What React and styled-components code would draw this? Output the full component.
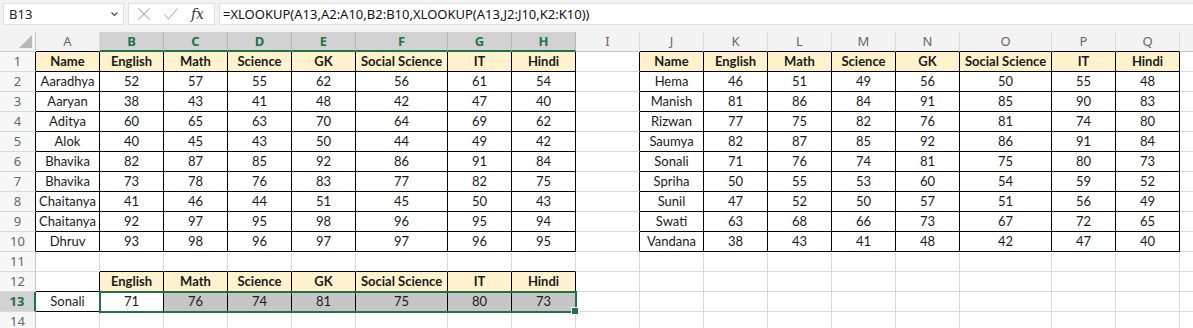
import React from "react";
import styled, { createGlobalStyle } from "styled-components";

const GlobalStyle = createGlobalStyle`
  html, body {
    margin: 0;
    background: #ffffff;
    overflow: hidden;
  }
  body {
    font-family: "Lato", "Liberation Sans", sans-serif;
  }
`;

// column widths in px, A..Q then one partial column with no visible letter
const COLS = [
  ["A", 64], ["B", 64], ["C", 64], ["D", 64], ["E", 64], ["F", 92], ["G", 64],
  ["H", 64], ["I", 64], ["J", 64], ["K", 64], ["L", 64], ["M", 64], ["N", 64],
  ["O", 92], ["P", 64], ["Q", 64], ["", 64],
];
const ROW_COUNT = 14;
const HEAD = ["Name", "English", "Math", "Science", "GK", "Social Science", "IT", "Hindi"];

const LEFT = [
  ["Aaradhya", 52, 57, 55, 62, 56, 61, 54],
  ["Aaryan", 38, 43, 41, 48, 42, 47, 40],
  ["Aditya", 60, 65, 63, 70, 64, 69, 62],
  ["Alok", 40, 45, 43, 50, 44, 49, 42],
  ["Bhavika", 82, 87, 85, 92, 86, 91, 84],
  ["Bhavika", 73, 78, 76, 83, 77, 82, 75],
  ["Chaitanya", 41, 46, 44, 51, 45, 50, 43],
  ["Chaitanya", 92, 97, 95, 98, 96, 95, 94],
  ["Dhruv", 93, 98, 96, 97, 97, 96, 95],
];

const RIGHT = [
  ["Hema", 46, 51, 49, 56, 50, 55, 48],
  ["Manish", 81, 86, 84, 91, 85, 90, 83],
  ["Rizwan", 77, 75, 82, 76, 81, 74, 80],
  ["Saumya", 82, 87, 85, 92, 86, 91, 84],
  ["Sonali", 71, 76, 74, 81, 75, 80, 73],
  ["Spriha", 50, 55, 53, 60, 54, 59, 52],
  ["Sunil", 47, 52, 50, 57, 51, 56, 49],
  ["Swati", 63, 68, 66, 73, 67, 72, 65],
  ["Vandana", 38, 43, 41, 48, 42, 47, 40],
];

const RESULT = ["Sonali", 71, 76, 74, 81, 75, 80, 73];

const SEL_ROW = 13;
const SEL_COLS = [1, 7];

// what sits in a cell: { text, head, table }
function cellAt(r, c) {
  if (r >= 1 && r <= 10 && c >= 0 && c <= 7) {
    if (r === 1) return { text: HEAD[c], head: true, table: true };
    return { text: LEFT[r - 2][c], table: true };
  }
  if (r >= 1 && r <= 10 && c >= 9 && c <= 16) {
    if (r === 1) return { text: HEAD[c - 9], head: true, table: true };
    return { text: RIGHT[r - 2][c - 9], table: true };
  }
  if (r === 12 && c >= 1 && c <= 7) return { text: HEAD[c], head: true, table: true };
  if (r === 13 && c >= 0 && c <= 7) return { text: RESULT[c], table: true };
  return { text: "", table: false };
}

const isTable = (r, c) => cellAt(r, c).table;
const inSelCols = (c) => c >= SEL_COLS[0] && c <= SEL_COLS[1];

const Page = styled.div`
  width: 1193px;
  height: 328px;
  overflow: hidden;
  background: #ffffff;
`;

const FormulaBar = styled.div`
  display: flex;
  align-items: stretch;
  gap: 4px;
  height: 32px;
  padding: 3px 0 7px 3px;
  box-sizing: border-box;
  background: #f3f3f3;
`;

const NameBox = styled.div`
  width: 121px;
  display: flex;
  align-items: center;
  justify-content: space-between;
  padding: 0 4px 0 5px;
  box-sizing: border-box;
  background: #ffffff;
  border: 1px solid #e1e1e1;
  font-family: "Noto Sans", sans-serif;
  font-size: 13px;
  color: #222;
`;

const Buttons = styled.div`
  width: 87px;
  display: flex;
  align-items: center;
  justify-content: space-around;
  padding: 0 4px 0 2px;
  box-sizing: border-box;
  background: #ffffff;
  border: 1px solid #e1e1e1;
`;

const Fx = styled.span`
  font-family: "DejaVu Serif", "Liberation Serif", serif;
  font-style: italic;
  font-size: 14px;
  color: #333;
`;

const Formula = styled.div`
  flex: 1;
  display: flex;
  align-items: center;
  padding-left: 3px;
  background: #ffffff;
  border: 1px solid #e1e1e1;
  border-right: none;
  font-family: "Noto Sans", sans-serif;
  font-size: 13px;
  color: #111;
  white-space: nowrap;
`;

const Sheet = styled.div`
  position: relative;
  display: grid;
  grid-template-columns: 36px ${COLS.map(([, w]) => `${w}px`).join(" ")} 1fr;
  grid-auto-rows: 20px;
`;

const Corner = styled.div`
  box-sizing: border-box;
  background: #f3f3f3;
  border-right: 1px solid #c8c8c8;
  border-bottom: 1px solid #c8c8c8;
  display: flex;
  align-items: flex-end;
  justify-content: flex-end;
  padding: 0 3px 3px 0;
`;

const ColHead = styled.div`
  box-sizing: border-box;
  background: ${(p) => (p.$sel ? "#d2d2d2" : "#f3f3f3")};
  border-right: 1px solid ${(p) => (p.$sel ? "#b6b6b6" : "#dadada")};
  border-bottom: ${(p) =>
    p.$sel ? "2px solid #217346" : `1px solid ${p.$dark ? "#000" : "#c8c8c8"}`};
  text-align: center;
  line-height: 19px;
  font-family: "Noto Sans", sans-serif;
  font-size: 13px;
  font-weight: ${(p) => (p.$sel ? 700 : 400)};
  color: ${(p) => (p.$sel ? "#217346" : "#666")};
`;

const RowHead = styled.div`
  box-sizing: border-box;
  background: ${(p) => (p.$sel ? "#d2d2d2" : "#f7f7f7")};
  border-right: ${(p) =>
    p.$sel ? "2px solid #217346" : `1px solid ${p.$dark ? "#000" : "#c8c8c8"}`};
  border-bottom: 1px solid #dadada;
  text-align: center;
  line-height: 19px;
  font-family: "Noto Sans", sans-serif;
  font-size: 13px;
  font-weight: ${(p) => (p.$sel ? 700 : 400)};
  color: ${(p) => (p.$sel ? "#217346" : "#666")};
`;

const Cell = styled.div`
  box-sizing: border-box;
  overflow: hidden;
  white-space: nowrap;
  background: ${(p) => (p.$head ? "#fff2cc" : p.$picked ? "#c6c6c6" : "#ffffff")};
  border-right: 1px solid ${(p) => (p.$r ? "#000" : "#d9d9d9")};
  border-bottom: 1px solid ${(p) => (p.$b ? "#000" : "#d9d9d9")};
  text-align: center;
  line-height: 19px;
  font-size: 13px;
  font-weight: ${(p) => (p.$head ? 700 : 400)};
  color: #1a1a1a;
`;

const Selection = styled.div`
  position: absolute;
  box-sizing: border-box;
  border: 2px solid #217346;
  pointer-events: none;
`;

const Handle = styled.div`
  position: absolute;
  right: -4px;
  bottom: -4px;
  width: 6px;
  height: 6px;
  background: #217346;
  border: 1px solid #ffffff;
`;

const Chevron = () => (
  <svg width="9" height="6" viewBox="0 0 9 6">
    <path d="M1.5 1.5 L4.5 4.5 L7.5 1.5" fill="none" stroke="#444" strokeWidth="1.1" />
  </svg>
);

const Cancel = () => (
  <svg width="14" height="14" viewBox="0 0 14 14">
    <path d="M1.5 1.5 L12.5 12.5 M12.5 1.5 L1.5 12.5" stroke="#b5b5b5" strokeWidth="1.1" />
  </svg>
);

const Enter = () => (
  <svg width="16" height="14" viewBox="0 0 16 14">
    <path d="M1.5 7.5 L5.5 12 L14.5 1.5" fill="none" stroke="#b5b5b5" strokeWidth="1.1" />
  </svg>
);

const Triangle = () => (
  <svg width="13" height="13" viewBox="0 0 13 13">
    <polygon points="13,0 13,13 0,13" fill="#b9b9b9" />
  </svg>
);

export default function App() {
  const colLeft = (c) => 36 + COLS.slice(0, c).reduce((s, [, w]) => s + w, 0);
  const selLeft = colLeft(SEL_COLS[0]) - 1;
  const selRight = colLeft(SEL_COLS[1] + 1);

  const cells = [];
  cells.push(<Corner key="corner"><Triangle /></Corner>);
  COLS.forEach(([letter], c) => {
    cells.push(
      <ColHead key={`h${c}`} $sel={inSelCols(c)} $dark={isTable(1, c)}>
        {letter}
      </ColHead>
    );
  });
  cells.push(<ColHead key="hx" />);

  for (let r = 1; r <= ROW_COUNT; r++) {
    cells.push(
      <RowHead key={`r${r}`} $sel={r === SEL_ROW} $dark={isTable(r, 0)}>
        {r}
      </RowHead>
    );
    COLS.forEach((_, c) => {
      const cell = cellAt(r, c);
      cells.push(
        <Cell
          key={`${r}-${c}`}
          $head={cell.head}
          $picked={r === SEL_ROW && inSelCols(c) && c !== SEL_COLS[0]}
          $r={cell.table || isTable(r, c + 1)}
          $b={cell.table || isTable(r + 1, c)}
        >
          {cell.text}
        </Cell>
      );
    });
    cells.push(<Cell key={`${r}-x`} />);
  }

  return (
    <Page>
      <GlobalStyle />
      <FormulaBar>
        <NameBox>
          <span>B13</span>
          <Chevron />
        </NameBox>
        <Buttons>
          <Cancel />
          <Enter />
          <Fx>fx</Fx>
        </Buttons>
        <Formula>=XLOOKUP(A13,A2:A10,B2:B10,XLOOKUP(A13,J2:J10,K2:K10))</Formula>
      </FormulaBar>
      <Sheet>
        {cells}
        <Selection
          style={{
            left: selLeft,
            top: SEL_ROW * 20 - 1,
            width: selRight - selLeft + 1,
            height: 22,
          }}
        >
          <Handle />
        </Selection>
      </Sheet>
    </Page>
  );
}
